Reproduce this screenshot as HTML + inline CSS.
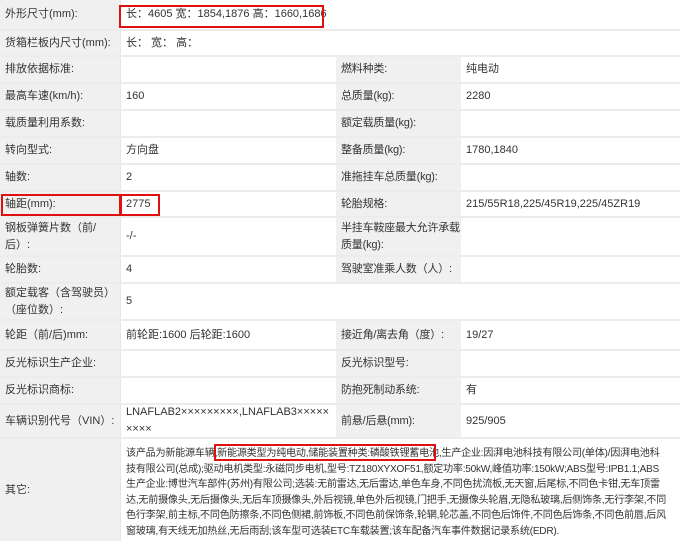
<!DOCTYPE html>
<html><head><meta charset="utf-8"><style>
*{margin:0;padding:0;box-sizing:border-box}
body{width:680px;height:541px;background:#fff;font-family:"Liberation Sans","Noto Sans CJK SC",sans-serif;font-size:11px;color:#333;position:relative;overflow:hidden}
.r{position:absolute;left:0;width:680px;border-bottom:2px solid #ececec}
.c{position:absolute;top:0;bottom:0;display:flex;align-items:center;padding-left:5px;line-height:17px;white-space:nowrap}
.l1{left:0;width:121px;background:#f0f0f0;border-right:1px solid #e6e6e6}
.v1{left:121px;width:215px}
.l2{left:336px;width:125px;background:#f0f0f0;letter-spacing:-0.2px}
.v2{left:461px;width:219px}
.box{position:absolute;border:2px solid #e01010}
.o{display:block;padding-top:7px;padding-right:1px;line-height:15.5px;font-size:10.1px;letter-spacing:-0.25px;overflow:hidden}
</style></head><body>
<div class="r" style="top:0;height:31px"><div class="c l1">外形尺寸(mm):</div><div class="c v1" style="width:559px">长：4605 宽：1854,1876 高：1660,1686</div></div>
<div class="r" style="top:31px;height:26px"><div class="c l1">货箱栏板内尺寸(mm):</div><div class="c v1" style="width:559px">长： 宽： 高：</div></div>
<div class="r" style="top:57px;height:27px"><div class="c l1">排放依据标准:</div><div class="c v1"></div><div class="c l2">燃料种类:</div><div class="c v2">纯电动</div></div>
<div class="r" style="top:84px;height:27px"><div class="c l1">最高车速(km/h):</div><div class="c v1">160</div><div class="c l2">总质量(kg):</div><div class="c v2">2280</div></div>
<div class="r" style="top:111px;height:27px"><div class="c l1">载质量利用系数:</div><div class="c v1"></div><div class="c l2">额定载质量(kg):</div><div class="c v2"></div></div>
<div class="r" style="top:138px;height:27px"><div class="c l1">转向型式:</div><div class="c v1">方向盘</div><div class="c l2">整备质量(kg):</div><div class="c v2">1780,1840</div></div>
<div class="r" style="top:165px;height:27px"><div class="c l1">轴数:</div><div class="c v1">2</div><div class="c l2">准拖挂车总质量(kg):</div><div class="c v2"></div></div>
<div class="r" style="top:192px;height:26px"><div class="c l1">轴距(mm):</div><div class="c v1">2775</div><div class="c l2">轮胎规格:</div><div class="c v2">215/55R18,225/45R19,225/45ZR19</div></div>
<div class="r" style="top:218px;height:39px"><div class="c l1">钢板弹簧片数（前/<br>后）:</div><div class="c v1">-/-</div><div class="c l2">半挂车鞍座最大允许承载<br>质量(kg):</div><div class="c v2"></div></div>
<div class="r" style="top:257px;height:27px"><div class="c l1">轮胎数:</div><div class="c v1">4</div><div class="c l2">驾驶室准乘人数（人）:</div><div class="c v2"></div></div>
<div class="r" style="top:284px;height:37px"><div class="c l1">额定载客（含驾驶员）<br>（座位数）:</div><div class="c v1" style="width:559px">5</div></div>
<div class="r" style="top:321px;height:30px"><div class="c l1">轮距（前/后)mm:</div><div class="c v1">前轮距:1600 后轮距:1600</div><div class="c l2">接近角/离去角（度）:</div><div class="c v2">19/27</div></div>
<div class="r" style="top:351px;height:27px"><div class="c l1">反光标识生产企业:</div><div class="c v1"></div><div class="c l2">反光标识型号:</div><div class="c v2"></div></div>
<div class="r" style="top:378px;height:27px"><div class="c l1">反光标识商标:</div><div class="c v1"></div><div class="c l2">防抱死制动系统:</div><div class="c v2">有</div></div>
<div class="r" style="top:405px;height:34px"><div class="c l1">车辆识别代号（VIN）:</div><div class="c v1">LNAFLAB2×××××××××,LNAFLAB3×××××<br>××××</div><div class="c l2">前悬/后悬(mm):</div><div class="c v2">925/905</div></div>
<div class="r" style="top:439px;height:102px;border:none"><div class="c l1">其它:</div><div class="c v1 o" style="width:559px">该产品为新能源车辆,新能源类型为纯电动,储能装置种类:磷酸铁锂蓄电池,生产企业:因湃电池科技有限公司(单体)/因湃电池科<br>技有限公司(总成);驱动电机类型:永磁同步电机,型号:TZ180XYXOF51,额定功率:50kW,峰值功率:150kW;ABS型号:IPB1.1;ABS<br>生产企业:博世汽车部件(苏州)有限公司;选装:无前雷达,无后雷达,单色车身,不同色扰流板,无天窗,后尾标,不同色卡钳,无车顶雷<br>达,无前摄像头,无后摄像头,无后车顶摄像头,外后视镜,单色外后视镜,门把手,无摄像头轮眉,无隐私玻璃,后侧饰条,无行李架,不同<br>色行李架,前主标,不同色防擦条,不同色侧裙,前饰板,不同色前保饰条,轮辋,轮芯盖,不同色后饰件,不同色后饰条,不同色前唇,后风<br>窗玻璃,有天线无加热丝,无后雨刮;该车型可选装ETC车载装置;该车配备汽车事件数据记录系统(EDR).</div></div>
<div class="box" style="left:119px;top:5px;width:205px;height:23px"></div>
<div class="box" style="left:1px;top:194px;width:120px;height:22px"></div>
<div class="box" style="left:120px;top:194px;width:40px;height:22px"></div>
<div class="box" style="left:214px;top:444px;width:222px;height:17px"></div>
</body></html>
